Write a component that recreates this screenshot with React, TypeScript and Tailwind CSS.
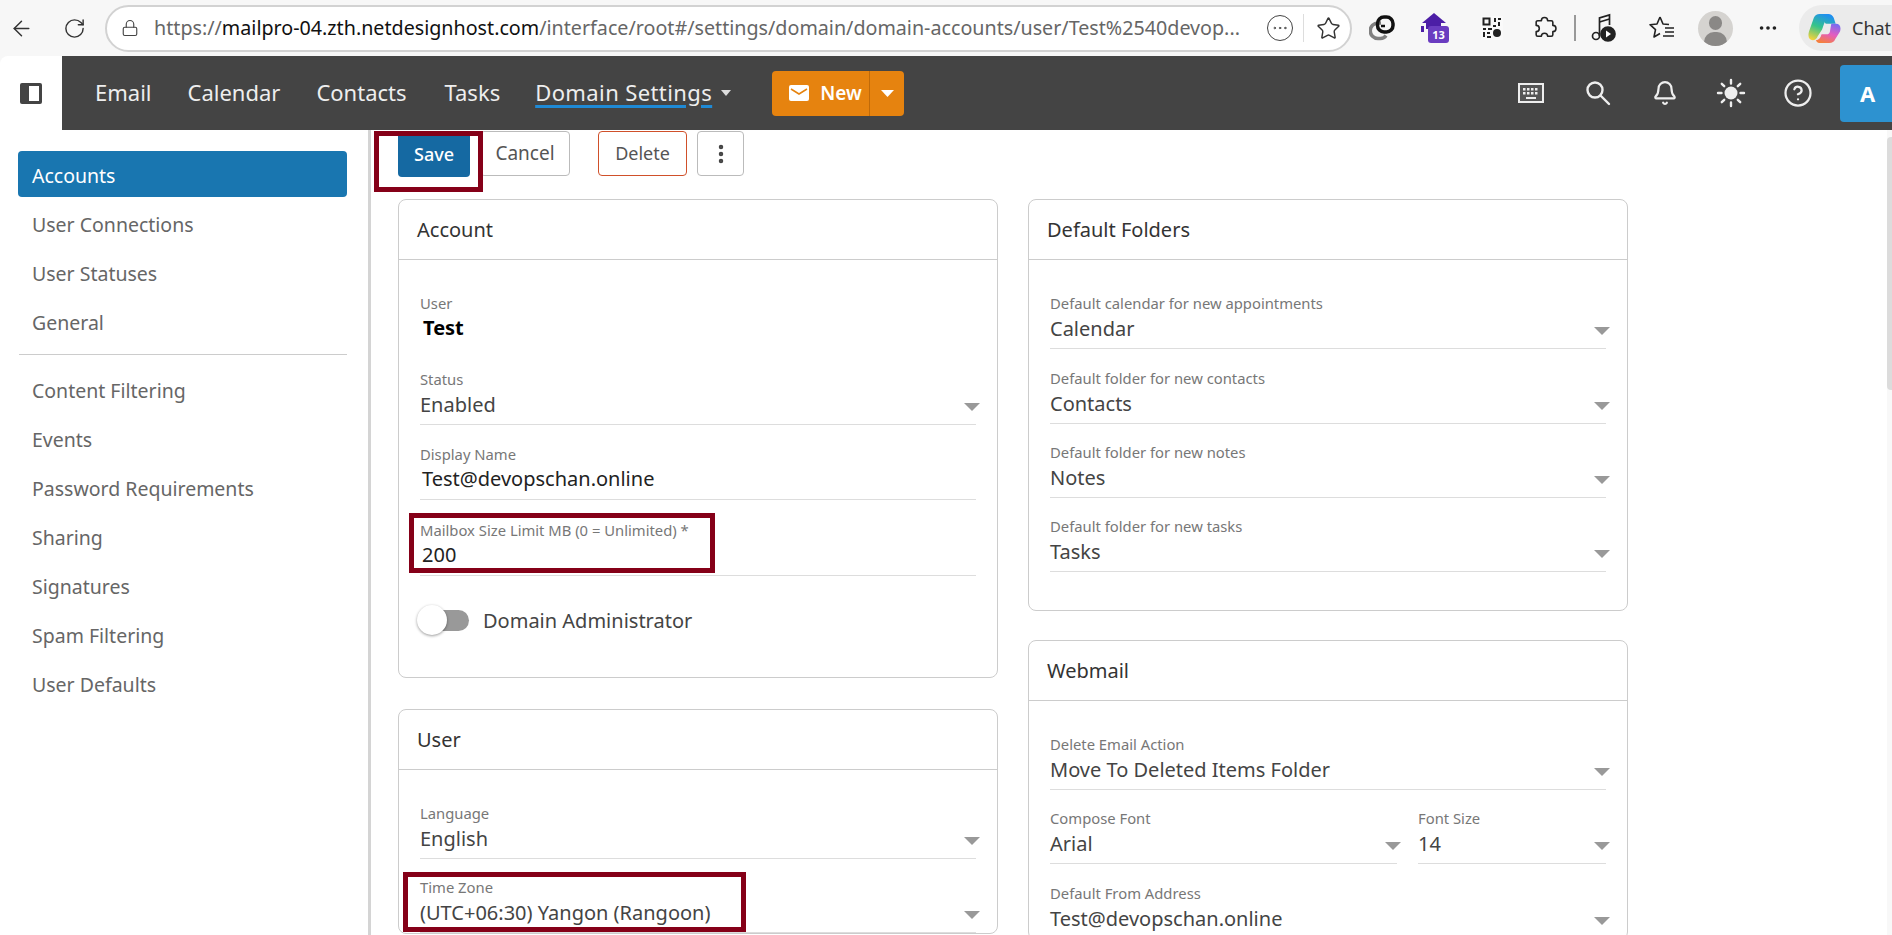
import * as React from 'react';
import { ArrowLeft, RotateCw, Lock, Star, Bell, CircleHelp, MoreHorizontal, Ellipsis, EllipsisVertical } from 'lucide-react';

const sideTop = ['User Connections', 'User Statuses', 'General'];
const sideBottom = ['Content Filtering', 'Events', 'Password Requirements', 'Sharing', 'Signatures', 'Spam Filtering', 'User Defaults'];

const Arrow = () => (
  <svg width="16" height="8" viewBox="0 0 16 8" className="-mr-1 mt-1 shrink-0">
    <path d="M0 0h16L8 8z" fill="#999" />
  </svg>
);

const Field = ({ label, value, select = true, className = '' }: { label: string; value: string; select?: boolean; className?: string }) => (
  <div className={`pt-5 ${className}`}>
    <div className="h-[18px] text-[14.8px] leading-[18px] text-[#777]">{label}</div>
    <div className={`flex h-[37px] items-center justify-between border-b border-[#ddd] text-[20px] text-[#444] ${select ? 'pb-[2px]' : 'pb-[5px]'}`}>
      <span className={select ? '' : 'pl-[2px] text-[#222]'}>{value}</span>
      {select && <Arrow />}
    </div>
  </div>
);

const Card = ({ title, className = '', children }: { title: string; className?: string; children: React.ReactNode }) => (
  <div className={`rounded-lg border border-[#ccc] bg-white ${className}`}>
    <div className="flex h-[60px] items-center border-b border-[#ccc] px-[18px] text-[20px] text-[#333]">{title}</div>
    <div className="px-[21px]">{children}</div>
  </div>
);

const Copilot = () => (
  <svg width="33" height="31" viewBox="0 0 34 32">
    <defs>
      <linearGradient id="cpA" x1="0.6" y1="0" x2="0.2" y2="1">
        <stop offset="0" stopColor="#1f8ff0" />
        <stop offset="0.5" stopColor="#35c48a" />
        <stop offset="1" stopColor="#f2d23c" />
      </linearGradient>
      <linearGradient id="cpB" x1="0.7" y1="0" x2="0.3" y2="1">
        <stop offset="0" stopColor="#7a6cf0" />
        <stop offset="0.5" stopColor="#e45cc0" />
        <stop offset="1" stopColor="#f5803c" />
      </linearGradient>
    </defs>
    <path d="M12 1h9c2.500 0 4.500 1.500 5.500 4l2 6H19c-1.500 0-2-1-1.500-2.500C16.500 11 15.500 14 14.500 17L10 24c-1 3-3 4-5 4-4 0-5.500-4-4-9L6 5c1-2.500 3-4 6-4z" fill="url(#cpA)" />
    <path d="M22 31h-9c-2.500 0-4-1-5-3 2 0 4-1 5-3.500l1-2.500h5c2 0 3-1 3.500-2.500L24 11h5c3.500 0 5.500 3 4 8l-5 8c-1 2.500-3 4-6 4z" fill="url(#cpB)" />
  </svg>
);

const BrowserBar = () => (
  <div className="flex h-[56px] items-center bg-[#f7f7f7]">
    <div className="flex w-[105px] items-center pl-[9px] text-[#333]">
      <ArrowLeft size={25} strokeWidth={1.4} />
      <RotateCw size={23} strokeWidth={1.5} className="ml-[29px]" />
    </div>
    <div className="flex h-[47px] w-[1247px] items-center rounded-full border-2 border-[#d2d2d2] bg-white pl-[14px]">
      <Lock size={18} strokeWidth={1.5} className="text-[#444]" />
      <div className="ml-[15px] w-[1097px] whitespace-nowrap text-[19.7px] text-[#666]">
        https://<span className="text-[#111]">mailpro-04.zth.netdesignhost.com</span>/interface/root#/settings/domain/domain-accounts/user/Test%2540devop...
      </div>
      <Ellipsis size={26} strokeWidth={1.3} className="ml-[16px] rounded-full border border-[#444] p-[3px] text-[#444]" />
      <div className="ml-[10px] h-[28px] w-px bg-[#ddd]" />
      <Star size={25} strokeWidth={1.4} className="ml-[12px] text-[#333]" />
    </div>
    <div className="ml-[17px] flex flex-1 items-center overflow-hidden">
      <svg width="26" height="26" viewBox="0 0 26 26" fill="none" strokeWidth="3.500">
        <path d="M12 8H9a7.500 7.500 0 0 0 0 15.500h2.500a6.500 6.500 0 0 0 5.500-3" stroke="#808080" />
        <rect x="8.500" y="2" width="15.500" height="15" rx="6.500" stroke="#111" />
        <path d="M12 11h4" stroke="#111" strokeWidth="2.500" />
      </svg>
      <svg width="30" height="32" viewBox="0 0 30 32" className="ml-[26px]">
        <path d="M13 1l12 10H1z" fill="#4c1ea6" />
        <rect x="5" y="11" width="15" height="6" fill="#4c1ea6" />
        <rect x="0" y="14" width="3" height="6" fill="#4c1ea6" />
        <rect x="7" y="14" width="21" height="17" rx="3" fill="#6a3cc0" />
        <text x="17.500" y="27" textAnchor="middle" fill="#fff" fontSize="11" fontWeight="700">13</text>
      </svg>
      <svg width="22" height="24" viewBox="0 0 22 24" className="ml-[30px]">
        <rect x="0" y="0" width="22" height="24" fill="#fafafa" />
        <rect x="2.500" y="2.500" width="6" height="6" fill="none" stroke="#222" strokeWidth="2" />
        <path d="M13 2h2v4h-2zM17 2h3v2h-3zM17 6h2v4h-2zM12 9h3v2h-3zM2 12h3v2H2zM7 12h4v2H7zM2 16h2v5H2zM6 16h3v2H6zM6 20h4v2H6z" fill="#222" />
        <circle cx="16" cy="17" r="4" fill="#222" />
      </svg>
      <svg width="25" height="25" viewBox="0 0 24 24" fill="none" stroke="#222" strokeWidth="1.500" strokeLinejoin="round" className="ml-[29px]">
        <path d="M9 4.500a3 3 0 0 1 6 0h3.500a1.500 1.500 0 0 1 1.500 1.500v3a3 3 0 0 1 0 6v3a1.500 1.500 0 0 1-1.500 1.500H15a3 3 0 0 0-6 0H5.500A1.500 1.500 0 0 1 4 18v-3a3 3 0 0 0 0-6V6a1.500 1.500 0 0 1 1.500-1.500z" />
      </svg>
      <div className="ml-[17px] h-[26px] w-[2px] bg-[#999]" />
      <svg width="26" height="30" viewBox="0 0 26 30" fill="none" stroke="#222" strokeWidth="1.700" className="ml-[15px]">
        <circle cx="5" cy="23" r="3.500" />
        <path d="M8.500 23V5l10-3v10" />
        <path d="M8.500 9l10-3" />
        <circle cx="17" cy="21" r="7" fill="#222" />
        <path d="M15 17.500l5 3.500-5 3.500z" fill="#fff" stroke="none" />
      </svg>
      <svg width="28" height="26" viewBox="0 0 28 26" fill="none" stroke="#222" strokeWidth="1.600" strokeLinejoin="round" className="ml-[31px]">
        <path d="M12 2l3 7 6 .5M12 2L9 9l-7 .7 5.500 5L6 22l6-3.500" />
        <path d="M17 13h9M17 17h9M15 21h11" />
      </svg>
      <div className="relative ml-[22px] h-[35px] w-[35px] overflow-hidden rounded-full bg-[#d5d3d0]">
        <div className="absolute left-[11px] top-[5px] h-[14px] w-[13px] rounded-full bg-[#8a8886]" />
        <div className="absolute left-[6px] top-[21px] h-[20px] w-[23px] rounded-full bg-[#8a8886]" />
      </div>
      <MoreHorizontal size={22} strokeWidth={2} className="ml-[24px] text-[#222]" />
      <div className="ml-[20px] flex h-[46px] flex-1 items-center rounded-l-full bg-[#ebebeb] pl-[9px] text-[18px] text-[#333]">
        <Copilot />
        <span className="ml-[11px]">Chat</span>
      </div>
    </div>
  </div>
);

const Keyboard = () => (
  <svg width="26" height="20" viewBox="0 0 26 20">
    <rect x="1" y="1" width="24" height="18" fill="#555" stroke="#eee" strokeWidth="2" />
    <path d="M5 5h2.500v2.500H5zM9 5h2.500v2.500H9zM13 5h2.500v2.500H13zM17 5h2.500v2.500H17zM5 9h2.500v2.500H5zM9 9h2.500v2.500H9zM13 9h2.500v2.500H13zM17 9h2.500v2.500H17zM8 14h10v2H8z" fill="#eee" />
  </svg>
);

const Sun = () => (
  <svg width="30" height="30" viewBox="0 0 30 30" stroke="#eee" strokeWidth="2.400" strokeLinecap="round">
    <circle cx="15" cy="15" r="6.500" fill="#eee" stroke="none" />
    <path d="M15 2v3.500M15 24.500V28M2 15h3.500M24.500 15H28M5.800 5.800l2.400 2.400M21.800 21.800l2.400 2.400M5.800 24.200l2.400-2.400M21.800 8.200l2.400-2.400" />
  </svg>
);

const NavBar = () => (
  <div className="bg-[#f7f7f7]">
    <div className="flex h-[74px] items-center overflow-hidden rounded-tl-lg bg-white">
      <div className="flex h-full w-[62px] items-center justify-center">
        <svg width="24" height="23" viewBox="0 0 24 23">
          <rect x="1" y="1" width="22" height="21" rx="2" fill="#444" />
          <rect x="10" y="4" width="10" height="15" fill="#fff" />
        </svg>
      </div>
      <div className="flex h-full flex-1 items-center bg-[#444] pl-[33px] text-[22px] text-[#eee]">
        <span className="pb-[2px]">Email</span>
        <span className="ml-[36px] pb-[2px]">Calendar</span>
        <span className="ml-[36px] pb-[2px]">Contacts</span>
        <span className="ml-[38px] pb-[2px]">Tasks</span>
        <span className="ml-[35px] pb-[2px] tracking-[0.4px] underline decoration-[#1f8ad6] decoration-[3px] underline-offset-[4px]">Domain Settings</span>
        <svg width="10" height="6" viewBox="0 0 10 6" className="ml-[9px]"><path d="M0 0h10L5 6z" fill="#ddd" /></svg>
        <div className="ml-[41px] flex h-[45px] w-[132px] items-center rounded bg-[#e6830f] text-white">
          <svg width="20" height="16" viewBox="0 0 20 16" className="ml-[17px]">
            <rect width="20" height="16" rx="2" fill="#fff" />
            <path d="M2 4l8 5 8-5" fill="none" stroke="#e6830f" strokeWidth="1.500" />
          </svg>
          <span className="ml-[11px] w-[49px] text-[19px] font-semibold">New</span>
          <div className="flex h-full flex-1 items-center justify-center border-l border-[#c06a08]">
            <svg width="13" height="7" viewBox="0 0 13 7"><path d="M0 0h13L6.500 7z" fill="#fff" /></svg>
          </div>
        </div>
        <div className="ml-auto flex h-full items-center text-[#eee]">
          <Keyboard />
          <svg width="27" height="27" viewBox="0 0 27 27" fill="none" stroke="#eee" strokeWidth="2.400" strokeLinecap="round" className="ml-[41px]">
            <circle cx="10" cy="10" r="7.500" />
            <path d="M15.500 15.500L24 24" />
          </svg>
          <Bell size={26} strokeWidth={2} className="ml-[40px]" />
          <div className="ml-[38px]"><Sun /></div>
          <CircleHelp size={30} strokeWidth={1.8} className="ml-[37px]" />
          <div className="ml-[27px] flex h-[57px] w-[52px] items-center justify-center rounded-l bg-[#2d92d0] pl-[3px] text-[22px] font-bold text-white">A</div>
        </div>
      </div>
    </div>
  </div>
);

const Sidebar = () => (
  <div className="w-[368px] shrink-0 pl-[18px] pr-[21px] pt-[21px] text-[19.5px] text-[#666]">
    <div className="flex h-[46px] items-center rounded bg-[#1976b0] px-[14px] pt-[3px] text-white">Accounts</div>
    {sideTop.map((s) => (
      <div key={s} className="mt-[3px] flex h-[46px] items-center px-[14px] pt-[3px]">{s}</div>
    ))}
    <div className="mb-[13px] ml-px mt-[10px] h-px bg-[#ccc]" />
    {sideBottom.map((s) => (
      <div key={s} className="mb-[3px] flex h-[46px] items-center px-[14px]">{s}</div>
    ))}
  </div>
);

const Toolbar = () => (
  <div className="relative flex pt-px text-[18px]">
    <button className="h-[46px] w-[72px] rounded bg-[#1569a2] font-medium text-white">Save</button>
    <button className="ml-[10px] h-[45px] w-[90px] rounded border border-[#bbb] pb-px text-[19px] text-[#555]">Cancel</button>
    <button className="ml-[28px] h-[45px] w-[89px] rounded border border-[#d0502a] text-[#555]">Delete</button>
    <button className="ml-[10px] flex h-[45px] w-[47px] items-center justify-center rounded border border-[#bbb] text-[#444]">
      <EllipsisVertical size={24} strokeWidth={2.500} />
    </button>
    <div className="pointer-events-none absolute -left-[24px] top-px h-[61px] w-[109px] border-[5px] border-[#850018]" />
  </div>
);

export default function App() {
  return (
    <div className="h-[935px] w-[1892px] overflow-hidden bg-white font-['Noto_Sans',sans-serif]">
      <BrowserBar />
      <NavBar />
      <div className="flex h-[805px] overflow-hidden">
        <Sidebar />
        <div className="w-[3px] shrink-0 bg-[#d4d4d4]" />
        <div className="flex-1 pl-[27px]">
          <Toolbar />
          <div className="mt-[22px] flex gap-[30px]">
            <div className="w-[600px] shrink-0">
              <Card title="Account">
                <div className="pt-[14px]">
                  <div className="mt-5 h-[18px] text-[14.8px] leading-[18px] text-[#777]">User</div>
                  <div className="flex h-[38px] items-center pb-[7px] pl-[3px] text-[20px] font-bold text-black">Test</div>
                </div>
                <Field label="Status" value="Enabled" />
                <Field label="Display Name" value="Test@devopschan.online" select={false} className="pb-px" />
                <div className="relative">
                  <Field label="Mailbox Size Limit MB (0 = Unlimited) *" value="200" select={false} />
                  <div className="pointer-events-none absolute -left-[11px] top-[12px] h-[60px] w-[306px] border-[5px] border-[#850018]" />
                </div>
                <div className="mb-[42px] mt-[29px] flex h-[30px] items-center">
                  <div className="relative h-[21px] w-[52px] -translate-x-[3px]">
                    <div className="absolute right-0 top-0 h-[21px] w-[40px] rounded-full bg-[#999]" />
                    <div className="absolute left-0 top-[-5px] h-[30px] w-[30px] rounded-full bg-white shadow-[0_1px_3px_rgba(0,0,0,0.4)]" />
                  </div>
                  <span className="ml-[11px] pt-[2px] text-[20px] text-[#444]">Domain Administrator</span>
                </div>
              </Card>
              <Card title="User" className="mt-[31px]">
                <div className="pt-[14px]">
                  <Field label="Language" value="English" />
                </div>
                <div className="relative -mt-px">
                  <Field label="Time Zone" value="(UTC+06:30) Yangon (Rangoon)" />
                  <div className="pointer-events-none absolute -left-[17px] top-[14px] h-[60px] w-[343px] border-[5px] border-[#850018]" />
                </div>
              </Card>
            </div>
            <div className="w-[600px] shrink-0">
              <Card title="Default Folders">
                <div className="pb-[38px] pt-[14px]">
                  <Field label="Default calendar for new appointments" value="Calendar" />
                  <Field label="Default folder for new contacts" value="Contacts" />
                  <Field label="Default folder for new notes" value="Notes" className="-mt-px" />
                  <Field label="Default folder for new tasks" value="Tasks" className="-mt-px" />
                </div>
              </Card>
              <Card title="Webmail" className="mt-[29px]">
                <div className="pt-[14px]">
                  <Field label="Delete Email Action" value="Move To Deleted Items Folder" />
                  <div className="-mt-px flex gap-[21px]">
                    <Field label="Compose Font" value="Arial" className="w-[347px]" />
                    <Field label="Font Size" value="14" className="w-[188px]" />
                  </div>
                  <Field label="Default From Address" value="Test@devopschan.online" />
                </div>
              </Card>
            </div>
          </div>
        </div>
        <div className="w-[5px] shrink-0 bg-[#f8f8f8]">
          <div className="mt-[7px] h-[253px] rounded-l bg-[#dcdcdc]" />
        </div>
      </div>
    </div>
  );
}
